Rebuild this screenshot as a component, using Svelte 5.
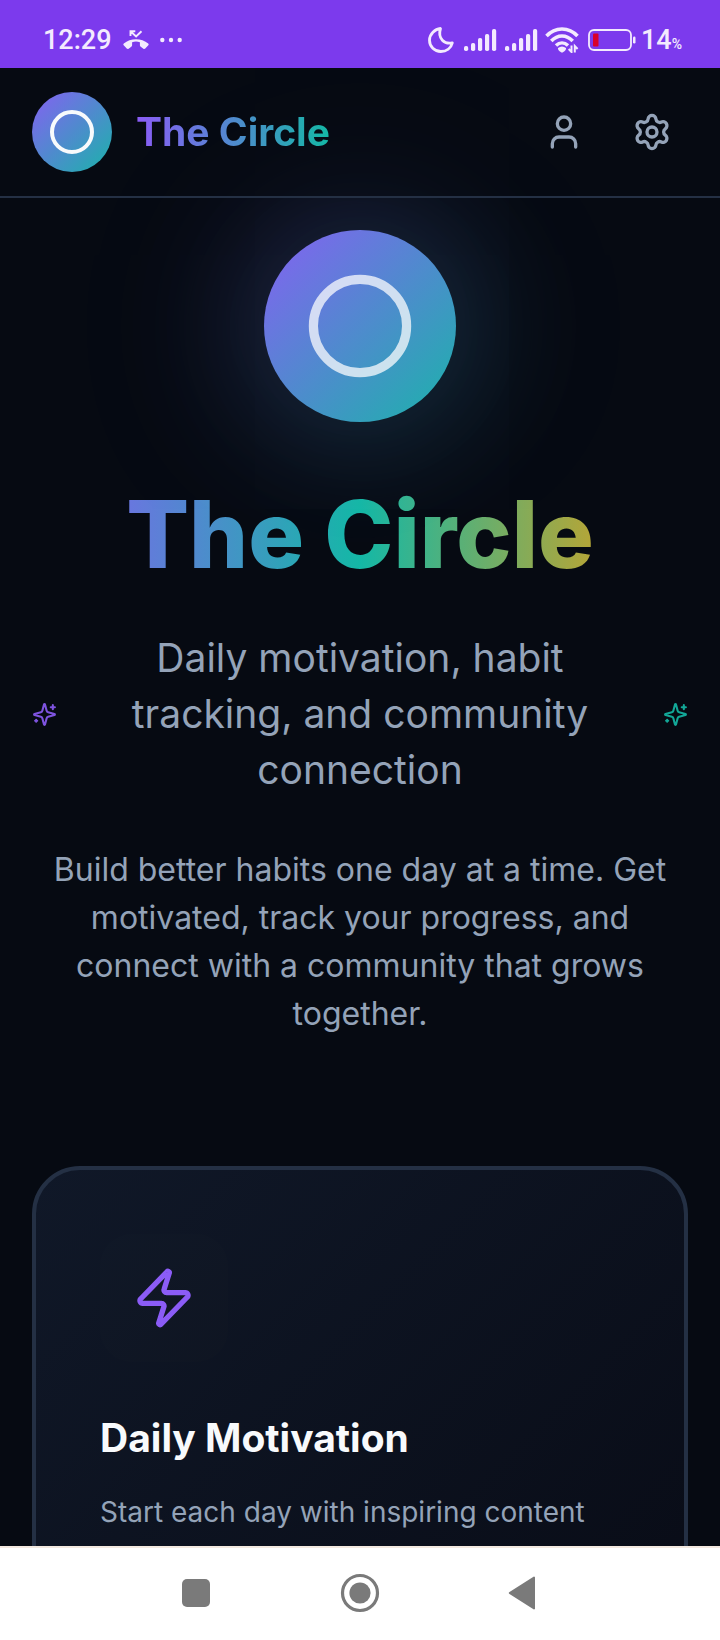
<script>
  const bars = [
    { x: 1, h: 5 },
    { x: 8, h: 8 },
    { x: 15, h: 13 },
    { x: 22, h: 17 },
    { x: 29, h: 22 }
  ];
</script>

{#snippet signal()}
  <svg class="signal" viewBox="0 0 34 22" aria-hidden="true">
    {#each bars as bar}
      <rect x={bar.x} y={22 - bar.h} width="4.2" height={bar.h} rx="1.8" fill="currentColor" />
    {/each}
  </svg>
{/snippet}

{#snippet sparkles(tone)}
  <svg class="sparkles {tone}" viewBox="0 0 24 24" aria-hidden="true">
    <path d="M9.937 15.5A2 2 0 0 0 8.5 14.063l-6.135-1.582a.5.5 0 0 1 0-.962L8.5 9.936A2 2 0 0 0 9.937 8.5l1.582-6.135a.5.5 0 0 1 .963 0L14.063 8.5A2 2 0 0 0 15.5 9.937l6.135 1.581a.5.5 0 0 1 0 .964L15.5 14.063a2 2 0 0 0-1.437 1.437l-1.582 6.135a.5.5 0 0 1-.963 0z" />
    <path d="M20 3v4M22 5h-4M4 17v2M5 18H3" />
  </svg>
{/snippet}

<div class="screen">
  <div class="status">
    <div class="status-left">
      <span class="time">12:29</span>
      <svg class="missed" viewBox="0 0 26 20" aria-hidden="true">
        <path d="M0.8 13.4C7.5 7.7 18.5 7.7 25.2 13.4c.6.6.6 1.3.1 1.9l-3 3.2c-.5.5-1.3.6-1.9.2l-2.7-1.9c-.5-.4-.8-.9-.8-1.5v-3.1c-2.5-.8-5.3-.8-7.8 0v3.1c0 .6-.3 1.1-.8 1.5l-2.7 1.9c-.6.4-1.4.3-1.9-.2l-3-3.2c-.5-.6-.5-1.3.1-1.9z" fill="currentColor" />
        <path d="M7.5 6V1.2h4.8M7.5 1.2l5.6 5.2 5.4-5.2" fill="none" stroke="currentColor" stroke-width="1.9" />
      </svg>
      <svg class="dots" viewBox="0 0 24 6" aria-hidden="true">
        <circle cx="3.3" cy="3" r="2.2" /><circle cx="12" cy="3" r="2.2" /><circle cx="20.7" cy="3" r="2.2" />
      </svg>
    </div>
    <div class="status-right">
      <svg class="moon" viewBox="0 0 26 26" aria-hidden="true">
        <path d="M12.5 1.5C7 2 1.5 7 1.5 13.2 1.5 19.6 6.6 24.5 12.8 24.5c5.7 0 10.2-3.4 11.5-8.7-7.6 1.7-15-3.9-11.8-14.3z" />
      </svg>
      {@render signal()}
      {@render signal()}
      <svg class="wifi" viewBox="0 0 34 26" aria-hidden="true">
        <g fill="none" stroke="currentColor" stroke-width="3.5">
          <path d="M1.5 9C10 -.5 24 -.5 32.5 9" />
          <path d="M6.3 14C12.5 7.2 21.5 7.2 27.7 14" />
          <path d="M11 18.6c3.6-3.4 8.4-3.4 12 0" />
        </g>
        <path d="M13 21c2.5-2 5.5-2 8 0 .5 2-2.5 4.5-4 4.5S12.5 23 13 21z" fill="currentColor" />
        <path d="M26.5 18.5v6.5l-2.8-3M29.8 25.5V19l2.8 3" fill="none" stroke="currentColor" stroke-width="2" />
      </svg>
      <svg class="battery" viewBox="0 0 48 22" aria-hidden="true">
        <rect x="1" y="1" width="42" height="20" rx="5" fill="none" stroke="currentColor" stroke-width="1.8" />
        <rect x="5" y="4.5" width="5.5" height="13" rx="1" fill="#d9002b" />
        <rect x="45" y="7.5" width="2.5" height="7" rx="1.2" fill="currentColor" />
      </svg>
      <span class="percent">14<small>%</small></span>
    </div>
  </div>

  <div class="app">
    <header>
      <div class="brand">
        <span class="logo"><span></span></span>
        <span class="name">The Circle</span>
      </div>
      <nav>
        <button aria-label="Profile">
          <svg viewBox="0 0 24 24" aria-hidden="true">
            <path d="M19 21v-2a4 4 0 0 0-4-4H9a4 4 0 0 0-4 4v2" />
            <circle cx="12" cy="7" r="4" />
          </svg>
        </button>
        <button aria-label="Settings">
          <svg viewBox="0 0 24 24" aria-hidden="true">
            <path d="M9.671 4.136a2.34 2.34 0 0 1 4.659 0 2.34 2.34 0 0 0 3.319 1.915 2.34 2.34 0 0 1 2.33 4.033 2.34 2.34 0 0 0 0 3.831 2.34 2.34 0 0 1-2.33 4.033 2.34 2.34 0 0 0-3.319 1.915 2.34 2.34 0 0 1-4.659 0 2.34 2.34 0 0 0-3.32-1.915 2.34 2.34 0 0 1-2.33-4.033 2.34 2.34 0 0 0 0-3.831A2.34 2.34 0 0 1 6.35 6.051a2.34 2.34 0 0 0 3.319-1.915" />
            <circle cx="12" cy="12" r="3" />
          </svg>
        </button>
      </nav>
    </header>

    <main>
      <section class="hero">
        <div class="orb">
          <svg viewBox="0 0 192 192" aria-hidden="true">
            <circle cx="96" cy="96" r="46.6" />
          </svg>
        </div>
        <h1>The Circle</h1>
        <div class="tagline">
          {@render sparkles('violet')}
          <p>Daily motivation, habit tracking, and community connection</p>
          {@render sparkles('teal')}
        </div>
        <p class="intro">
          Build better habits one day at a time. Get motivated, track your progress, and connect with
          a community that grows together.
        </p>
      </section>

      <article class="card">
        <div class="tile">
          <svg viewBox="0 0 24 24" aria-hidden="true">
            <path d="M4 14a1 1 0 0 1-.78-1.63l9.9-10.2a.5.5 0 0 1 .86.46l-1.92 6.02A1 1 0 0 0 13 10h7a1 1 0 0 1 .78 1.63l-9.9 10.2a.5.5 0 0 1-.86-.46l1.92-6.02A1 1 0 0 0 11 14z" />
          </svg>
        </div>
        <h2>Daily Motivation</h2>
        <p>Start each day with inspiring content</p>
      </article>
    </main>
  </div>

  <div class="system">
    <button aria-label="Recent apps">
      <svg viewBox="0 0 40 40" aria-hidden="true"><rect x="6" y="6" width="28" height="28" rx="5" /></svg>
    </button>
    <button aria-label="Home">
      <svg viewBox="0 0 40 40" aria-hidden="true">
        <circle cx="20" cy="20" r="17.5" fill="none" stroke="#7a7a7a" stroke-width="3.2" />
        <circle cx="20" cy="20" r="10.6" />
      </svg>
    </button>
    <button aria-label="Back">
      <svg viewBox="0 0 40 40" aria-hidden="true"><path d="M29.5 3.7a1 1 0 0 1 1.5.9v30.8a1 1 0 0 1-1.5.9L5.500 21a1.200 1.200 0 0 1 0-2z" /></svg>
    </button>
  </div>
</div>

<style>
  :global(body) {
    margin: 0;
  }

  .screen {
    --violet: #8b5cf6;
    --teal: #14b8a6;
    --amber: #f59e0b;
    --muted: #94a3b8;
    --line: #243044;
    height: 100vh;
    display: flex;
    flex-direction: column;
    overflow: hidden;
    background: #060a12;
    color: var(--muted);
    font-family: Inter, "Liberation Sans", sans-serif;
  }

  h1,
  h2,
  p {
    margin: 0;
  }

  button {
    display: grid;
    place-items: center;
    padding: 0;
    border: 0;
    background: none;
    color: inherit;
  }

  .status {
    flex: none;
    display: flex;
    justify-content: space-between;
    align-items: center;
    box-sizing: border-box;
    height: 68px;
    padding: 12px 38px 0 43px;
    background: #7c3aed;
    color: #f3eafe;
    font-family: Roboto, sans-serif;
    font-weight: 500;
    font-size: 27px;
    line-height: 32px;
  }

  .status-left,
  .status-right {
    display: flex;
    align-items: center;
  }

  .missed {
    width: 26px;
    height: 20px;
    margin: 0 10px 0 11px;
  }

  .dots {
    width: 24px;
    height: 6px;
    fill: currentColor;
  }

  .status-right {
    gap: 7px;
  }

  .moon {
    width: 26px;
    height: 26px;
    margin-right: 2px;
    fill: none;
    stroke: currentColor;
    stroke-width: 2.8;
    stroke-linejoin: round;
  }

  .signal {
    width: 34px;
    height: 22px;
  }

  .wifi {
    width: 34px;
    height: 26px;
  }

  .battery {
    width: 48px;
    height: 22px;
    margin: 0 -2px 0 2px;
  }

  .percent small {
    font-size: 14px;
    line-height: 1;
  }

  .app {
    flex: 1;
    min-height: 0;
    overflow: hidden;
  }

  header {
    position: relative;
    z-index: 1;
    display: flex;
    justify-content: space-between;
    align-items: center;
    padding: 24px 32px;
    border-bottom: 2px solid var(--line);
    background: rgb(5 9 17 / 50%);
  }

  .brand,
  nav {
    display: flex;
    align-items: center;
  }

  .brand {
    gap: 24px;
  }

  .logo,
  .orb {
    display: grid;
    place-items: center;
    border-radius: 50%;
    background: linear-gradient(135deg, var(--violet) -5%, var(--teal) 105%);
  }

  .logo {
    width: 80px;
    height: 80px;
  }

  .logo span {
    width: 36px;
    height: 36px;
    border: 4px solid #f8fafc;
    border-radius: 50%;
  }

  .name {
    background: linear-gradient(90deg, var(--violet), var(--teal));
    background-clip: text;
    color: transparent;
    font-size: 39px;
    font-weight: 700;
    line-height: 56px;
  }

  nav {
    gap: 16px;
  }

  nav button {
    width: 72px;
    height: 72px;
  }

  nav svg,
  .tile svg,
  .sparkles {
    fill: none;
    stroke: currentColor;
    stroke-width: 2;
    stroke-linecap: round;
    stroke-linejoin: round;
  }

  nav svg {
    width: 40px;
    height: 40px;
  }

  main {
    display: flex;
    flex-direction: column;
    gap: 128px;
    padding: 32px;
  }

  .hero {
    isolation: isolate;
    display: flex;
    flex-direction: column;
    align-items: center;
    gap: 48px;
    text-align: center;
  }

  .orb {
    position: relative;
    width: 192px;
    height: 192px;
    margin-bottom: 16px;
    box-shadow: 0 0 240px rgb(139 148 246 / 14%);
  }

  .orb::before {
    content: "";
    position: absolute;
    z-index: -1;
    inset: -24px;
    border-radius: 50%;
    background: linear-gradient(135deg, var(--violet), var(--teal));
    filter: blur(60px);
    opacity: 0.2;
  }

  .orb svg {
    width: 100%;
    fill: none;
    stroke: rgb(248 250 252 / 76%);
    stroke-width: 9.2;
  }

  h1 {
    align-self: stretch;
    background: linear-gradient(90deg, var(--violet), var(--teal), var(--amber));
    background-clip: text;
    color: transparent;
    font-size: 93px;
    font-weight: 800;
    line-height: 96px;
  }

  .tagline {
    align-self: stretch;
    display: flex;
    align-items: center;
    justify-content: space-between;
    gap: 48px;
    font-size: 39px;
    line-height: 56px;
  }

  .tagline p {
    max-width: 480px;
  }

  .sparkles {
    flex: none;
    width: 25px;
    height: 25px;
    opacity: 0.9;
  }

  .violet,
  .tile {
    color: var(--violet);
  }

  .teal {
    color: var(--teal);
  }

  .intro {
    font-size: 32px;
    line-height: 48px;
  }

  .card {
    min-height: 420px;
    padding: 64px;
    border: 4px solid var(--line);
    border-radius: 48px;
    background: linear-gradient(135deg, #101828, #080b15);
  }

  .tile {
    display: grid;
    place-items: center;
    width: 128px;
    height: 128px;
    margin-bottom: 48px;
    border-radius: 32px;
    background: linear-gradient(135deg, #101827, #0f1522);
  }

  .tile svg {
    width: 64px;
    height: 64px;
  }

  h2 {
    margin-bottom: 24px;
    color: #f8fafc;
    font-size: 39px;
    font-weight: 700;
    line-height: 56px;
  }

  .card p {
    font-size: 28px;
    line-height: 44px;
  }

  .system {
    flex: none;
    display: flex;
    justify-content: center;
    align-items: center;
    gap: 124px;
    box-sizing: border-box;
    height: 94px;
    padding-bottom: 2px;
    border-top: 2px solid #f3e9e0;
    background: #fff;
  }

  .system svg {
    width: 40px;
    height: 40px;
    fill: #7a7a7a;
  }
</style>
